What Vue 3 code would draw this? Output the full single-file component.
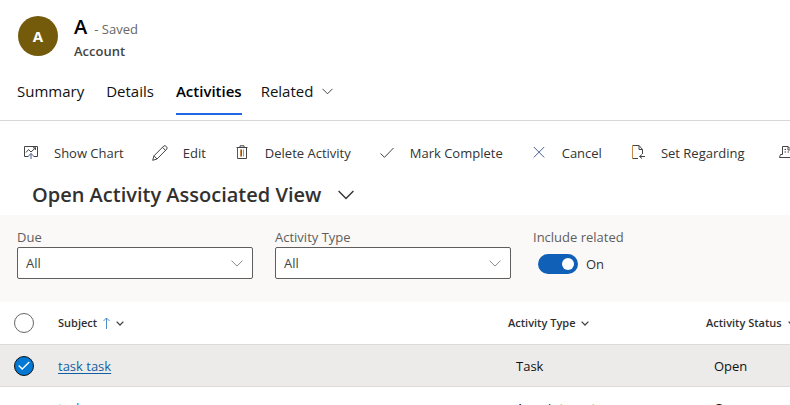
<script setup>
import { ref } from 'vue'

const tabs = ['Summary', 'Details', 'Activities']
const active = ref('Activities')
const due = ref('All')
const type = ref('All')
const related = ref(true)

const commands = [
  { label: 'Show Chart', icon: 'chart' },
  { label: 'Edit', icon: 'edit' },
  { label: 'Delete Activity', icon: 'trash' },
  { label: 'Mark Complete', icon: 'check' },
  { label: 'Cancel', icon: 'cancel' },
  { label: 'Set Regarding', icon: 'regarding' }
]

const rows = ref([
  { subject: 'task task', type: 'Task', status: 'Open', selected: true },
  { subject: 'task', type: 'Appointment', status: 'Open', selected: false }
])
</script>

<template>
  <div class="page">
    <header class="record">
      <div class="avatar">A</div>
      <div>
        <div class="name-line">
          <h1>A</h1>
          <span class="saved">- Saved</span>
        </div>
        <div class="entity">Account</div>
      </div>
    </header>

    <nav class="tabs">
      <button
        v-for="tab in tabs"
        :key="tab"
        type="button"
        class="tab"
        :class="{ active: tab === active }"
        @click="active = tab"
      >{{ tab }}</button>
      <button type="button" class="tab related">
        Related
        <svg width="11" height="7" viewBox="0 0 11 7"><path d="M.5 .8 5.5 5.8 10.5 .8" /></svg>
      </button>
    </nav>

    <div class="commands">
      <button v-for="c in commands" :key="c.label" type="button" class="command">
        <svg class="icon" width="16" height="16" viewBox="0 0 16 16">
          <template v-if="c.icon === 'chart'">
            <path d="M5.500 11.500H1.500V1.500H14.500V11.500H10.500" />
            <path d="M3 7.500 5.500 4.500 8 7 12.500 2.800M10 2.800H12.500V5" />
            <path class="accent" d="M8 14V8.500M5.500 11 8 8.500 10.500 11" />
          </template>
          <path v-else-if="c.icon === 'edit'" d="M.7 15.300 2 10.800 11.800 1Q13 .2 14.300 1.500 15.700 2.800 14.800 4.100L5 14ZM2 10.800 5 14M10.500 2.300 13.500 5.400" />
          <template v-else-if="c.icon === 'trash'">
            <path d="M2.500 2.500H13.500M6 2.500V.8H10V2.500M12.500 2.500V13.500H3.500" />
            <path class="plum" d="M3.500 2.500V13.500" />
            <path class="warm" d="M6.500 4.500V11.500M9.500 4.500V11.500" />
            <path class="accent" d="M7.500 4.500V11.500" />
          </template>
          <path v-else-if="c.icon === 'check'" d="M1.500 8.500 5.500 12.300 14.500 3" />
          <path v-else-if="c.icon === 'cancel'" class="accent" d="M2.800 2 13.200 12.400M13.200 2 2.800 12.400" />
          <template v-else>
            <path d="M8 13.500H2.500M2.500 .5H9L12.500 4.500V9M9 .5V4.500H12.500M15 11.500H9.500M12 9.500 9.500 11.500 12 13.500" />
            <path class="warm" d="M2.500 .5V13.500" />
          </template>
        </svg>
        <span>{{ c.label }}</span>
      </button>
      <button type="button" class="command compact" aria-label="More commands">
        <svg class="icon" width="16" height="16" viewBox="0 0 16 16">
          <path d="M3.500 9.500V1.500H9L12.500 5V9.500M9 1.500V5H12.500M3.500 9.500H1.500L.5 12.500H15.500L14.500 9.500H12.500M5.500 4.500H7M5.500 7H7M8.500 7H10" />
        </svg>
      </button>
    </div>

    <button type="button" class="view">
      <h2>Open Activity Associated View</h2>
      <svg width="16" height="10" viewBox="0 0 16 10"><path d="M.6 1 8 8.400 15.400 1" /></svg>
    </button>

    <section class="filters">
      <div class="field">
        <label for="due">Due</label>
        <div class="select">
          <select id="due" v-model="due"><option>All</option></select>
          <svg width="12" height="7" viewBox="0 0 12 7"><path d="M.5 .6 6 6.100 11.500 .6" /></svg>
        </div>
      </div>
      <div class="field">
        <label for="type">Activity Type</label>
        <div class="select">
          <select id="type" v-model="type"><option>All</option></select>
          <svg width="12" height="7" viewBox="0 0 12 7"><path d="M.5 .6 6 6.100 11.500 .6" /></svg>
        </div>
      </div>
      <div class="toggle-field">
        <label for="related">Include related</label>
        <div class="toggle">
          <input id="related" v-model="related" type="checkbox" role="switch">
          <span>{{ related ? 'On' : 'Off' }}</span>
        </div>
      </div>
    </section>

    <table>
      <colgroup><col class="c-check"><col class="c-subject"><col class="c-type"><col></colgroup>
      <thead>
        <tr>
          <th><input type="checkbox" class="round" aria-label="Select all"></th>
          <th>
            <span class="head">Subject
              <svg class="sort" width="7" height="12" viewBox="0 0 7 12"><path d="M3.500 12V1M.5 4 3.500 1 6.500 4" /></svg>
              <svg class="caret" width="8" height="5" viewBox="0 0 8 5"><path d="M.6 .6 4 4 7.400 .6" /></svg>
            </span>
          </th>
          <th>
            <span class="head">Activity Type
              <svg class="caret" width="8" height="5" viewBox="0 0 8 5"><path d="M.6 .6 4 4 7.400 .6" /></svg>
            </span>
          </th>
          <th>
            <span class="head">Activity Status
              <svg class="caret" width="8" height="5" viewBox="0 0 8 5"><path d="M.6 .6 4 4 7.400 .6" /></svg>
            </span>
          </th>
        </tr>
      </thead>
      <tbody>
        <tr v-for="row in rows" :key="row.subject" :class="{ selected: row.selected }">
          <td>
            <span class="pick">
              <input v-model="row.selected" type="checkbox" class="round" :aria-label="row.subject">
              <svg v-if="row.selected" width="12" height="9" viewBox="0 0 12 9"><path d="M.7 4.500 4.200 8 11.300 .9" /></svg>
            </span>
          </td>
          <td><a href="#">{{ row.subject }}</a></td>
          <td class="value">{{ row.type }}</td>
          <td class="value">{{ row.status }}</td>
        </tr>
      </tbody>
    </table>
  </div>
</template>

<style>
body {
  background: #fff;
}
</style>

<style scoped>
.page {
  height: 100vh;
  overflow: hidden;
  font-family: "Open Sans", "Noto Sans", sans-serif;
  font-size: 13px;
  line-height: 20px;
  color: #333;
  white-space: nowrap;
}
button {
  padding: 0;
  border: 0;
  background: none;
  font: inherit;
  color: inherit;
}
svg {
  flex: none;
  fill: none;
  stroke: #444;
}
h1, h2 {
  margin: 0;
  font-size: 20px;
  font-weight: 600;
}
.record {
  display: flex;
  gap: 16px;
  padding: 16px 18px 0;
}
.avatar {
  width: 40px;
  height: 40px;
  border-radius: 50%;
  background: #745b0b;
  color: #fff;
  font-size: 15px;
  font-weight: 700;
  line-height: 40px;
  text-align: center;
}
.name-line {
  display: flex;
  align-items: baseline;
  gap: 7px;
  height: 25px;
}
h1 {
  line-height: 22px;
  color: #000;
}
.saved {
  color: #666;
}
.entity {
  font-weight: 600;
  color: #444;
}
.tabs {
  display: flex;
  gap: 22px;
  margin-top: 14px;
  padding: 0 17px 5px;
  border-bottom: 1px solid #d8d8d8;
  font-size: 15px;
}
.tab {
  padding: 4px 0 10px;
  border-bottom: 2px solid transparent;
  line-height: 24px;
  color: #111;
}
.tab.active {
  margin-right: -3px;
  border-color: #2266e3;
  font-weight: 600;
  color: #000;
}
.related {
  display: flex;
  align-items: center;
  gap: 9px;
}
.commands {
  display: flex;
  gap: 28px;
  padding: 22px 0 0 23px;
}
.command {
  display: flex;
  flex: none;
  align-items: center;
  gap: 15px;
  line-height: 20px;
}
.compact {
  padding: 0 6px;
}
.icon .accent {
  stroke: #4a5d91;
}
.icon .warm {
  stroke: #c98a45;
}
.icon .plum {
  stroke: #7a3f7c;
}
.view {
  display: flex;
  align-items: center;
  gap: 17px;
  padding: 18px 0 6px 32px;
}
.view svg {
  stroke: #333;
  stroke-width: 1.400;
}
h2 {
  line-height: 28px;
  color: #323130;
}
.filters {
  display: flex;
  gap: 22px;
  padding: 12px 17px 21px;
  background: #faf9f8;
  color: #605e5c;
}
.field {
  width: 236px;
}
.filters label {
  display: block;
}
.select {
  display: grid;
  align-items: center;
}
.select > * {
  grid-area: 1 / 1;
}
select {
  width: 100%;
  height: 32px;
  padding: 0 8px;
  appearance: none;
  border: 1px solid #605e5c;
  border-radius: 2px;
  background: #fff;
  color: #444;
  font: inherit;
}
.select svg {
  justify-self: end;
  margin-right: 10px;
  stroke: #888;
  pointer-events: none;
}
.toggle {
  display: flex;
  align-items: center;
  gap: 8px;
  padding: 7px 5px;
  color: #333;
}
.toggle input {
  display: flex;
  align-items: center;
  width: 40px;
  height: 20px;
  margin: 0;
  padding: 0 4px;
  appearance: none;
  border-radius: 10px;
  background: #888;
}
.toggle input::before {
  content: "";
  width: 12px;
  height: 12px;
  border-radius: 50%;
  background: #fff;
}
.toggle input:checked {
  justify-content: flex-end;
  background: #1160b7;
}
table {
  width: 100%;
  table-layout: fixed;
  border-collapse: separate;
  border-spacing: 0;
}
.c-check {
  width: 58px;
}
.c-subject {
  width: 450px;
}
.c-type {
  width: 198px;
}
th, td {
  height: 41px;
  padding: 0;
  border-bottom: 1px solid #dcdbda;
  text-align: left;
}
th {
  height: 42px;
  font-size: 11px;
  font-weight: 600;
  color: #323130;
}
th:first-child, td:first-child {
  padding-left: 14px;
}
.head {
  display: flex;
  align-items: center;
  gap: 6px;
}
.sort {
  stroke: #4b8fc9;
}
.caret {
  stroke-width: 1.300;
}
.round {
  display: block;
  box-sizing: border-box;
  width: 20px;
  height: 20px;
  margin: 0;
  appearance: none;
  border: 1px solid #666;
  border-radius: 50%;
  background: #fff;
}
.round:checked {
  border-color: #111;
  background: #0078d4;
}
.pick {
  display: grid;
  width: 20px;
  place-items: center;
}
.pick > * {
  grid-area: 1 / 1;
}
.pick .round:not(:checked):not(:focus) {
  opacity: 0;
}
tr:hover .pick .round:not(:checked) {
  opacity: 1;
}
.pick svg {
  stroke: #fff;
  stroke-width: 1.400;
  pointer-events: none;
}
.selected {
  background: #ecebe9;
}
td {
  color: #111;
}
td.value {
  padding-left: 8px;
}
a {
  color: #0078d4;
  text-decoration: none;
}
.selected a {
  color: #115ea3;
  text-decoration: underline;
  text-underline-offset: 2px;
}
</style>
